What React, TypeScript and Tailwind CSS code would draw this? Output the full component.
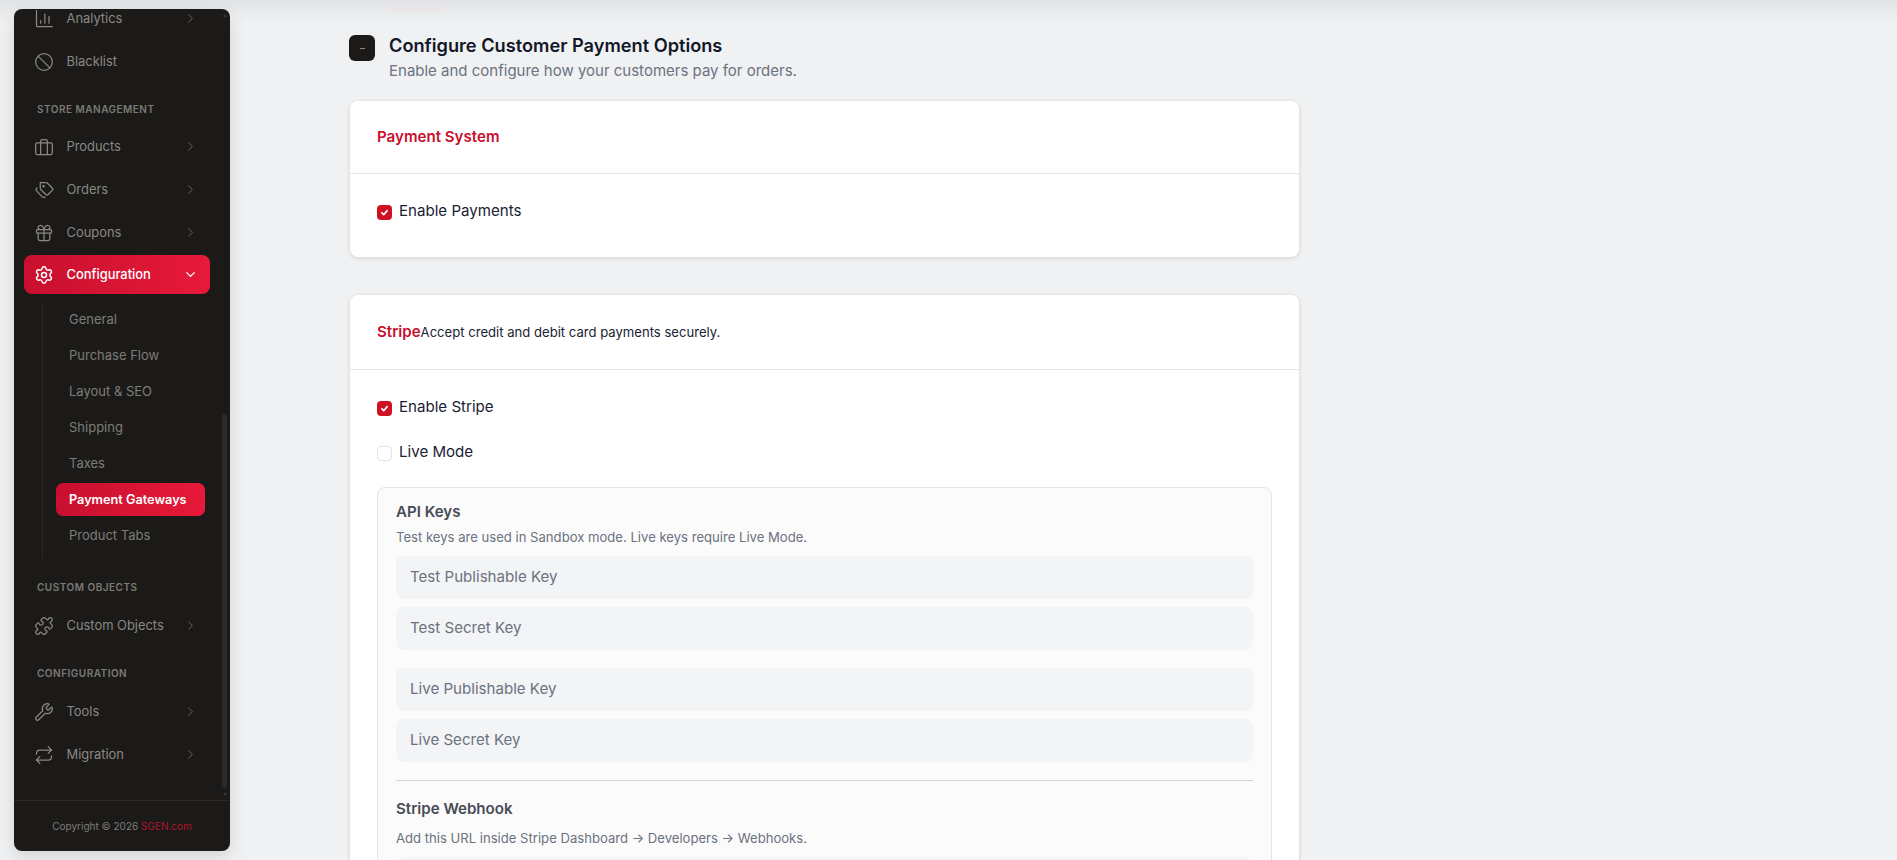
import { Ban, ChevronDown, ChevronRight, Gift, Puzzle, Repeat, Settings, Wrench } from "lucide-react";
import type { ReactNode } from "react";

const font = { fontFamily: "Inter, 'Liberation Sans', sans-serif" };

function ChartIcon() {
  return (
    <svg viewBox="0 0 24 24" fill="none" stroke="currentColor" strokeWidth="1.5" strokeLinecap="round" strokeLinejoin="round" className="w-5 h-5">
      <path d="M3 2v18a1 1 0 0 0 1 1h18" />
      <path d="M8 17v-3" />
      <path d="M13 17V6" />
      <path d="M18 17V9" />
    </svg>
  );
}

function BriefcaseIcon() {
  return (
    <svg viewBox="0 0 24 24" fill="none" stroke="currentColor" strokeWidth="1.5" strokeLinecap="round" strokeLinejoin="round" className="w-5 h-5">
      <rect x="2" y="7" width="20" height="14" rx="2" />
      <path d="M8 7V5a2 2 0 0 1 2-2h4a2 2 0 0 1 2 2v2" />
      <path d="M8 7v14" />
      <path d="M16 7v14" />
    </svg>
  );
}

function TagsIcon() {
  return (
    <svg viewBox="0 0 24 24" fill="none" stroke="currentColor" strokeWidth="1.5" strokeLinecap="round" strokeLinejoin="round" className="w-5 h-5">
      <path d="M9 3h5.5a2 2 0 0 1 1.4.6l6 6a2 2 0 0 1 0 2.8l-5 5a2 2 0 0 1-2.8 0l-6-6a2 2 0 0 1-.6-1.4V4a1 1 0 0 1 1.500-1z" />
      <circle cx="11.500" cy="7.500" r="0.8" />
      <path d="M3.500 9.500 2.800 10.600a2 2 0 0 0 .3 2.400l6.500 7a3 3 0 0 0 3.600.5" />
    </svg>
  );
}

function NavItem({ icon, label }: { icon: ReactNode; label: string }) {
  return (
    <div className="flex items-center h-[43px] pl-[20px] pr-[32px] text-[#8a8884]">
      <span className="w-5 h-5 flex items-center justify-center shrink-0">{icon}</span>
      <span className="ml-[12.500px] text-[12.9px] flex-1 whitespace-nowrap">{label}</span>
      <ChevronRight className="w-[15px] h-[15px] text-[#6b6966]" strokeWidth={1.5} />
    </div>
  );
}

function SectionLabel({ children, className }: { children: ReactNode; className: string }) {
  return <div className={`pl-[23px] text-[10px] font-semibold tracking-[0.5px] leading-[14px] text-[#7c7a76] ${className}`}>{children}</div>;
}

const subItems = ["General", "Purchase Flow", "Layout & SEO", "Shipping", "Taxes"];

function Sidebar() {
  return (
    <aside className="absolute left-[14px] top-[9px] w-[216px] h-[842px] rounded-[8px] bg-[#1b1a19] flex flex-col overflow-hidden shadow-[0_6px_18px_rgba(0,0,0,0.12)]">
      <div className="relative h-[791px] overflow-hidden">
        <nav className="-mt-[12px]">
          <NavItem icon={<ChartIcon />} label="Analytics" />
          <div className="flex items-center h-[43px] pl-[20px] text-[#8a8884]">
            <Ban className="w-5 h-5" strokeWidth={1.5} />
            <span className="ml-[12.500px] text-[12.9px]">Blacklist</span>
          </div>
          <SectionLabel className="mt-[19px] mb-[9px]">STORE MANAGEMENT</SectionLabel>
          <NavItem icon={<BriefcaseIcon />} label="Products" />
          <NavItem icon={<TagsIcon />} label="Orders" />
          <NavItem icon={<Gift className="w-5 h-5" strokeWidth={1.5} />} label="Coupons" />
          <div className="ml-[10px] mr-[20px] mt-[1px] h-[39px] rounded-[8px] bg-gradient-to-r from-[#c8102e] to-[#e8193a] flex items-center pl-[10px] pr-[12px] text-white">
            <Settings className="w-5 h-5 shrink-0" strokeWidth={1.8} />
            <span className="ml-[12.500px] flex-1 text-[12.9px] font-medium">Configuration</span>
            <ChevronDown className="w-[15px] h-[15px]" strokeWidth={2} />
          </div>
          <div className="ml-[28px] mr-[25px] mt-[8px] border-l border-[#2a2928] pl-[13px] pb-[5px]">
            {subItems.map((item) => (
              <div key={item} className="h-[36px] flex items-center pl-[13px] text-[13px] text-[#7e7c78]">
                {item}
              </div>
            ))}
            <div className="h-[33px] mt-[1px] rounded-[7px] bg-gradient-to-r from-[#c8102e] to-[#e8193a] flex items-center pl-[13px] text-[12.7px] font-semibold text-white">
              Payment Gateways
            </div>
            <div className="h-[36px] mt-[2px] flex items-center pl-[13px] text-[13px] text-[#7e7c78]">Product Tabs</div>
          </div>
          <SectionLabel className="mt-[21px] mb-[10px]">CUSTOM OBJECTS</SectionLabel>
          <NavItem icon={<Puzzle className="w-5 h-5" strokeWidth={1.5} />} label="Custom Objects" />
          <SectionLabel className="mt-[19px] mb-[10px]">CONFIGURATION</SectionLabel>
          <NavItem icon={<Wrench className="w-5 h-5" strokeWidth={1.5} />} label="Tools" />
          <NavItem icon={<Repeat className="w-5 h-5" strokeWidth={1.5} />} label="Migration" />
        </nav>
        {/* scrollbar */}
        <div className="absolute right-[3px] top-[405px] bottom-[12px] w-[5px] rounded-full bg-[#2b2a29]" />
        <div className="absolute right-[3px] top-[5px] w-0 h-0 border-x-[2.500px] border-x-transparent border-b-[3px] border-b-[#3a3938]" />
        <div className="absolute right-[3px] bottom-[4px] w-0 h-0 border-x-[2.500px] border-x-transparent border-t-[3px] border-t-[#3a3938]" />
      </div>
      <div className="flex-1 border-t border-[#2a2928] flex items-center justify-center text-[10px] text-[#7e7c78]">
        <span>
          Copyright © 2026 <span className="text-[#b3152b]">SGEN.com</span>
        </span>
      </div>
    </aside>
  );
}

function Check({ checked, label }: { checked?: boolean; label: string }) {
  return (
    <div className="flex items-center gap-[7px] h-[20px]">
      {checked ? (
        <span className="w-[15px] h-[15px] mt-[2px] rounded-[4px] bg-[#cf1124] flex items-center justify-center">
          <svg viewBox="0 0 12 12" className="w-[9px] h-[9px]" fill="none" stroke="white" strokeWidth="2.2" strokeLinecap="round" strokeLinejoin="round">
            <path d="M2.500 6.500 5 9l4.500-5.500" />
          </svg>
        </span>
      ) : (
        <span className="w-[15px] h-[15px] mt-[2px] rounded-[4px] bg-white border border-[#e1e3e7]" />
      )}
      <span className="text-[15.1px] text-[#1a2233]">{label}</span>
    </div>
  );
}

function KeyInput({ placeholder, className }: { placeholder: string; className?: string }) {
  return <div className={`h-[43px] rounded-[8px] bg-[#f3f4f6] flex items-center pl-[14px] text-[15.1px] text-[#6b7280] ${className ?? ""}`}>{placeholder}</div>;
}

export default function App() {
  return (
    <div className="relative w-[1897px] h-[860px] overflow-hidden bg-[#f0f1f3]" style={font}>
      {/* shadow from the header scrolled off above */}
      <div className="absolute inset-x-0 top-0 h-[22px] bg-gradient-to-b from-[#e2e3e5] to-transparent" />
      <div className="absolute left-[388px] top-[9px] w-[56px] h-[2px] bg-[#f0e3e5] blur-[1px]" />
      <Sidebar />
      <main className="relative ml-[350px] w-[949px]">
        <div className="flex pt-[35px]">
          <div className="-ml-[1px] w-[26px] h-[26px] rounded-[6px] bg-[#1b1a19] flex items-center justify-center shrink-0">
            <span className="w-[5px] h-[1px] bg-[#8a8884]" />
          </div>
          <div className="ml-[14px] -mt-[2px]">
            <h1 className="text-[18.2px] leading-[24px] font-semibold text-[#111827]">Configure Customer Payment Options</h1>
            <p className="text-[15px] leading-[24px] mt-[2px] text-[#6b7280]">Enable and configure how your customers pay for orders.</p>
          </div>
        </div>

        <section className="mt-[18px] rounded-[8px] bg-white shadow-[0_1px_4px_rgba(0,0,0,0.14)]">
          <div className="h-[73px] border-b border-[#e5e7eb] flex items-center pl-[27px]">
            <h2 className="text-[15.1px] font-semibold text-[#c8102e]">Payment System</h2>
          </div>
          <div className="h-[83px] pl-[27px] pt-[27px]">
            <Check checked label="Enable Payments" />
          </div>
        </section>

        <section className="mt-[38px] rounded-[8px] bg-white shadow-[0_1px_4px_rgba(0,0,0,0.14)] h-[600px]">
          <div className="h-[75px] border-b border-[#e5e7eb] flex items-center pl-[27px]">
            <h2 className="text-[15.1px] font-semibold text-[#c8102e]">Stripe</h2>
            <span className="mt-[2px] text-[13.1px] text-[#1a2233]">Accept credit and debit card payments securely.</span>
          </div>
          <div className="pl-[27px] pr-[27px] pt-[27px]">
            <Check checked label="Enable Stripe" />
            <div className="mt-[25px]">
              <Check label="Live Mode" />
            </div>
            <div className="mt-[25px] rounded-[8px] border border-[#e2e4e8] bg-[#fbfbfb] px-[18px] pt-[14px]">
              <h3 className="text-[15.1px] leading-[20px] font-semibold text-[#474b55]">API Keys</h3>
              <p className="text-[13.1px] leading-[20px] mt-[5px] text-[#6b7280]">Test keys are used in Sandbox mode. Live keys require Live Mode.</p>
              <KeyInput placeholder="Test Publishable Key" className="mt-[9px]" />
              <KeyInput placeholder="Test Secret Key" className="mt-[8px]" />
              <KeyInput placeholder="Live Publishable Key" className="mt-[18px]" />
              <KeyInput placeholder="Live Secret Key" className="mt-[8px]" />
              <div className="mt-[18px] border-t border-[#d1d3d6]" />
              <h3 className="text-[15.1px] leading-[20px] mt-[18px] font-semibold text-[#474b55]">Stripe Webhook</h3>
              <p className="text-[13.1px] leading-[20px] mt-[9px] text-[#6b7280]">Add this URL inside Stripe Dashboard → Developers → Webhooks.</p>
              <KeyInput placeholder="" className="mt-[9px]" />
            </div>
          </div>
        </section>
      </main>
    </div>
  );
}
